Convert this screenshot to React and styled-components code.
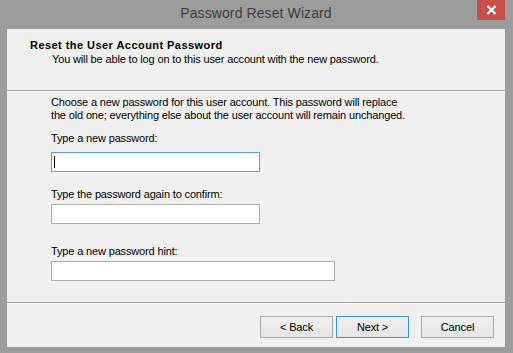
import styled, { createGlobalStyle } from "styled-components";

const GlobalStyle = createGlobalStyle`
    html, body {
        margin: 0;
        padding: 0;
        background: #9c9c9c;
    }
    * {
        box-sizing: border-box;
    }
`;

const Frame = styled.div`
    width: 513px;
    height: 353px;
    display: flex;
    flex-direction: column;
    padding: 0 8px 6px 7px;
    background: #9c9c9c;
    font-family: "Liberation Sans", Arial, sans-serif;
`;

const TitleBar = styled.div`
    height: 29px;
    display: grid;
    grid-template-columns: 1fr auto 1fr;
`;

const Title = styled.div`
    grid-column: 2;
    padding-top: 5px;
    font-size: 14px;
    color: #3c3c3c;
    letter-spacing: 0.1px;
`;

const CloseButton = styled.div`
    grid-column: 3;
    justify-self: end;
    width: 28px;
    height: 20px;
    background: #c7504f;
    display: flex;
    align-items: center;
    justify-content: center;
`;

const Content = styled.div`
    flex: 1;
    display: flex;
    flex-direction: column;
    background: #f0f0f0;
    color: #000;
    font-size: 11px;
    line-height: 13px;
    letter-spacing: -0.15px;
`;

const Header = styled.div`
    height: 62px;
    padding: 10px 0 0 23px;
    border-bottom: 1px solid #a0a0a0;
    box-shadow: 0 1px 0 #fff;
`;

const HeaderTitle = styled.div`
    font-weight: bold;
    letter-spacing: 0.45px;
`;

const HeaderSubtitle = styled.div`
    margin-top: 1px;
    padding-left: 22px;
`;

const Body = styled.div`
    flex: 1;
    padding: 5px 0 0 44px;
    display: flex;
    flex-direction: column;
    align-items: flex-start;
`;

const Intro = styled.p`
    margin: 0;
`;

const Label = styled.div`
    margin-top: ${({ $top }) => $top}px;
    margin-bottom: ${({ $bottom }) => $bottom}px;
`;

const TextBox = styled.div`
    width: ${({ $wide }) => ($wide ? "284px" : "209px")};
    height: 20px;
    background: #fff;
    border: 1px solid ${({ $focused }) => ($focused ? "#5a9ee0" : "#acacac")};
    padding: 3px 0 0 2px;
`;

const Caret = styled.span`
    display: block;
    width: 1px;
    height: 12px;
    background: #000;
`;

const Footer = styled.div`
    height: 45px;
    border-top: 1px solid #a0a0a0;
    box-shadow: inset 0 1px 0 #fff;
    display: flex;
    justify-content: flex-end;
    align-items: flex-start;
    padding: 13px 11px 0 0;
`;

const Button = styled.div`
    width: 73px;
    height: 22px;
    margin-left: ${({ $space }) => $space}px;
    display: flex;
    align-items: center;
    justify-content: center;
    border: 1px solid ${({ $default }) => ($default ? "#3c94e8" : "#acacac")};
    background: linear-gradient(#f0f0f0, #e5e5e5);
    font-size: 11px;
`;

function App() {
    return (
        <>
            <GlobalStyle />
            <Frame>
                <TitleBar>
                    <Title>Password Reset Wizard</Title>
                    <CloseButton>
                        <svg width="11" height="10" viewBox="0 0 11 10">
                            <path d="M1.5 1 L9.5 9 M9.5 1 L1.5 9" stroke="#fff" strokeWidth="2.2" />
                        </svg>
                    </CloseButton>
                </TitleBar>
                <Content>
                    <Header>
                        <HeaderTitle>Reset the User Account Password</HeaderTitle>
                        <HeaderSubtitle>
                            You will be able to log on to this user account with the new password.
                        </HeaderSubtitle>
                    </Header>
                    <Body>
                        <Intro>
                            Choose a new password for this user account. This password will replace
                            <br />
                            the old one; everything else about the user account will remain unchanged.
                        </Intro>
                        <Label $top={10} $bottom={7}>Type a new password:</Label>
                        <TextBox $focused>
                            <Caret />
                        </TextBox>
                        <Label $top={16} $bottom={3}>Type the password again to confirm:</Label>
                        <TextBox />
                        <Label $top={21} $bottom={3}>Type a new password hint:</Label>
                        <TextBox $wide />
                    </Body>
                    <Footer>
                        <Button $space={0}>&lt; Back</Button>
                        <Button $space={3} $default>Next &gt;</Button>
                        <Button $space={12}>Cancel</Button>
                    </Footer>
                </Content>
            </Frame>
        </>
    );
}

export default App;
